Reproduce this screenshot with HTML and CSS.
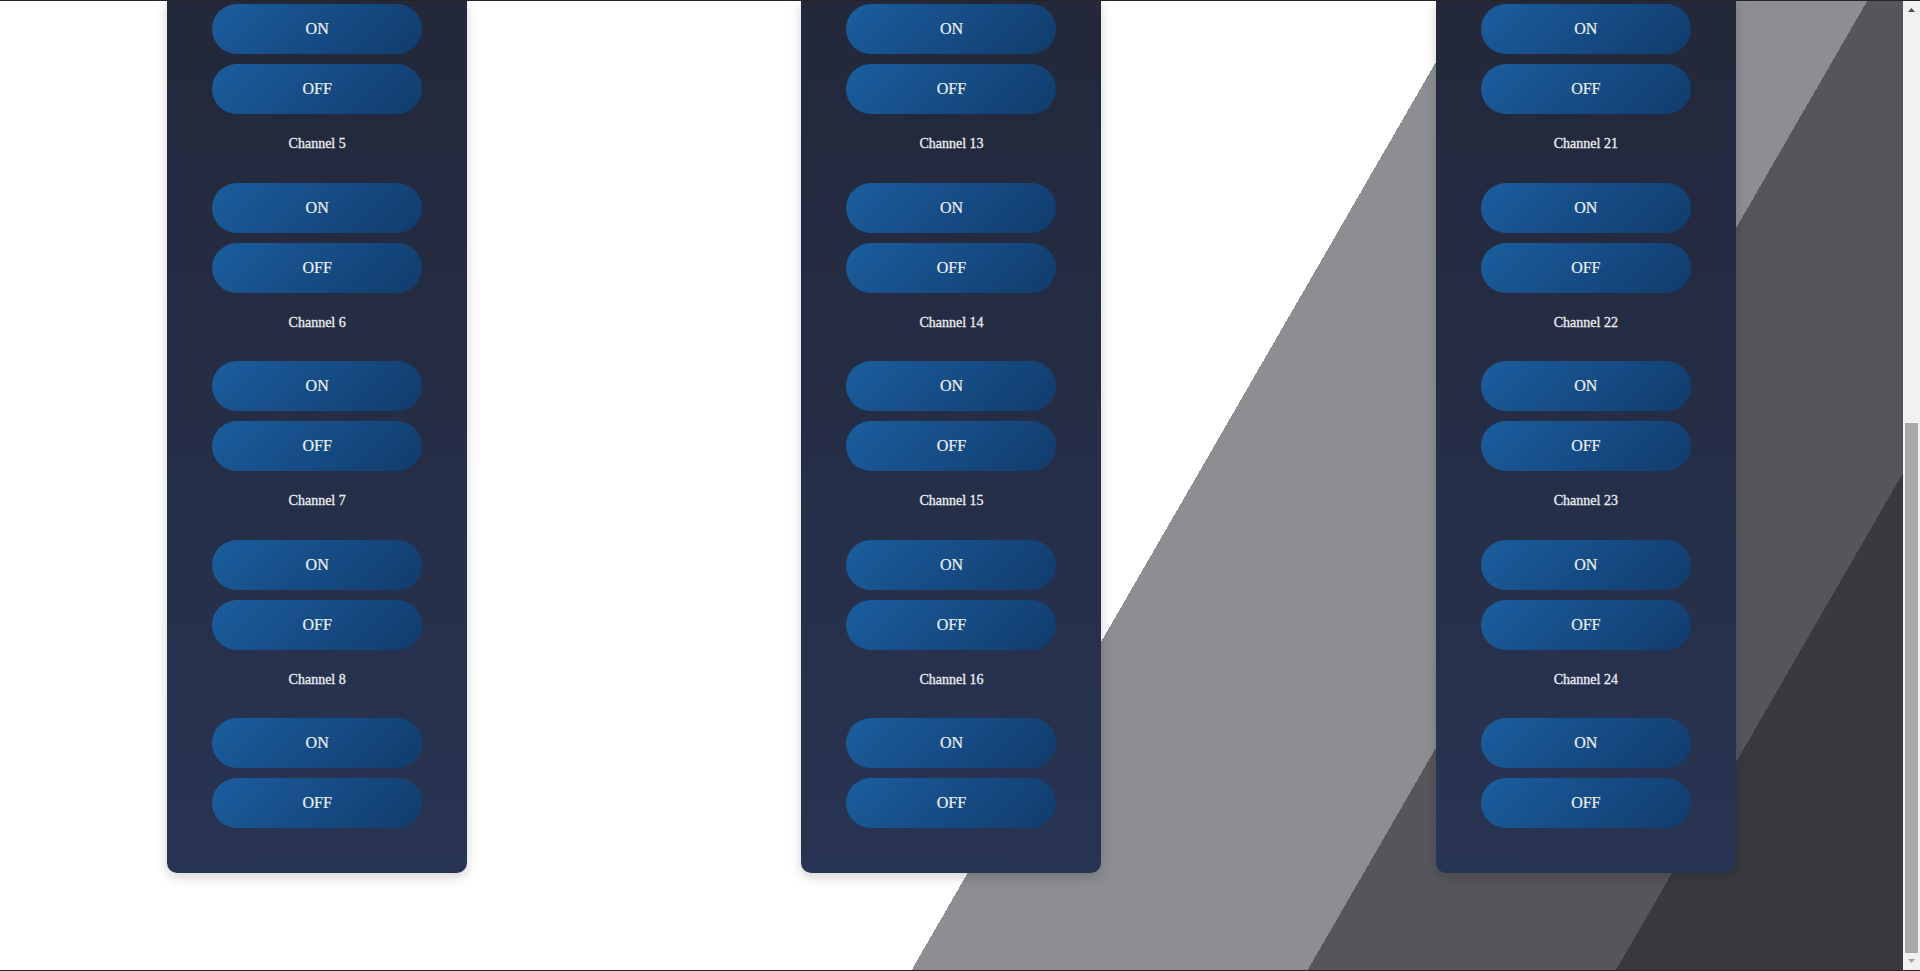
FILE: index.html
```html
<!DOCTYPE html>
<html lang="en">
<head>
<meta charset="utf-8">
<title>Relay Control</title>
<link rel="stylesheet" href="styles.css">
</head>
<body>
<div class="edge"></div>
<div class="window">
  <main class="content">
    <section class="card">
      <div class="channel first">
        <button class="btn">ON</button>
        <button class="btn">OFF</button>
      </div>
      <div class="channel"><h3 class="label">Channel 5</h3><button class="btn">ON</button><button class="btn">OFF</button></div>
      <div class="channel"><h3 class="label">Channel 6</h3><button class="btn">ON</button><button class="btn">OFF</button></div>
      <div class="channel"><h3 class="label">Channel 7</h3><button class="btn">ON</button><button class="btn">OFF</button></div>
      <div class="channel"><h3 class="label">Channel 8</h3><button class="btn">ON</button><button class="btn">OFF</button></div>
    </section>
    <section class="card">
      <div class="channel first">
        <button class="btn">ON</button>
        <button class="btn">OFF</button>
      </div>
      <div class="channel"><h3 class="label">Channel 13</h3><button class="btn">ON</button><button class="btn">OFF</button></div>
      <div class="channel"><h3 class="label">Channel 14</h3><button class="btn">ON</button><button class="btn">OFF</button></div>
      <div class="channel"><h3 class="label">Channel 15</h3><button class="btn">ON</button><button class="btn">OFF</button></div>
      <div class="channel"><h3 class="label">Channel 16</h3><button class="btn">ON</button><button class="btn">OFF</button></div>
    </section>
    <section class="card">
      <div class="channel first">
        <button class="btn">ON</button>
        <button class="btn">OFF</button>
      </div>
      <div class="channel"><h3 class="label">Channel 21</h3><button class="btn">ON</button><button class="btn">OFF</button></div>
      <div class="channel"><h3 class="label">Channel 22</h3><button class="btn">ON</button><button class="btn">OFF</button></div>
      <div class="channel"><h3 class="label">Channel 23</h3><button class="btn">ON</button><button class="btn">OFF</button></div>
      <div class="channel"><h3 class="label">Channel 24</h3><button class="btn">ON</button><button class="btn">OFF</button></div>
    </section>
  </main>
  <div class="scrollbar">
    <div class="arrow">
      <svg width="7" height="4" viewBox="0 0 7 4"><polygon points="3.5,0 7,4 0,4" fill="#505050"/></svg>
    </div>
    <div class="track"><div class="thumb"></div></div>
    <div class="arrow">
      <svg width="7" height="4" viewBox="0 0 7 4"><polygon points="0,0 7,0 3.5,4" fill="#a3a3a3"/></svg>
    </div>
  </div>
</div>
<div class="edge"></div>
</body>
</html>
```
FILE: styles.css
```css
html, body {
  margin: 0;
  padding: 0;
}
body {
  width: 1920px;
  height: 971px;
  overflow: hidden;
  display: flex;
  flex-direction: column;
  font-family: "Liberation Serif", "Times New Roman", serif;
  background: #ffffff;
}
.edge {
  height: 1px;
  flex: 0 0 1px;
  background: #262626;
}
.window {
  flex: 1;
  display: flex;
  min-height: 0;
}
.content {
  flex: 1;
  display: grid;
  grid-template-columns: repeat(3, 1fr);
  justify-items: center;
  align-items: start;
  background: linear-gradient(120deg,
    #ffffff 0, #ffffff 1274px,
    #8d8e92 1274px, #8d8e92 1617px,
    #55565b 1617px, #55565b 1884px,
    #393a3f 1884px);
}
.card {
  width: 300px;
  box-sizing: border-box;
  padding: 3px 45px 45px;
  background: linear-gradient(to bottom, #23283a, #283453);
  border-radius: 0 0 10px 10px;
  box-shadow: 0 4px 12px rgba(0, 0, 0, 0.18);
  display: flex;
  flex-direction: column;
}
.channel {
  display: flex;
  flex-direction: column;
  gap: 10px;
}
.label {
  margin: 22px 0 20.5px;
  height: 16px;
  line-height: 16px;
  font-size: 14px;
  font-weight: normal;
  color: #eceef2;
  -webkit-text-stroke: 0.3px #eceef2;
  text-align: center;
}
.btn {
  height: 50px;
  width: 210px;
  border: none;
  border-radius: 25px;
  background: linear-gradient(135deg, #1b5e9e 0%, #164c85 50%, #113c6c 100%);
  color: #eef0f4;
  -webkit-text-stroke: 0.2px #eef0f4;
  font-family: "Liberation Serif", "Times New Roman", serif;
  font-size: 16px;
  padding: 0;
  cursor: pointer;
}
.scrollbar {
  width: 17px;
  flex: 0 0 17px;
  background: #f1f1f1;
  display: flex;
  flex-direction: column;
}
.arrow {
  height: 16px;
  flex: 0 0 16px;
  display: flex;
  align-items: center;
  justify-content: center;
}
.arrow:first-child {
  align-items: flex-start;
  padding-top: 7px;
  box-sizing: border-box;
}
.arrow:last-child {
  align-items: flex-start;
  padding-top: 5px;
  box-sizing: border-box;
}
.track {
  flex: 1;
  display: flex;
  flex-direction: column;
  align-items: center;
}
.thumb {
  margin-top: 406px;
  width: 13px;
  height: 530px;
  background: #a8a8a8;
}
```
